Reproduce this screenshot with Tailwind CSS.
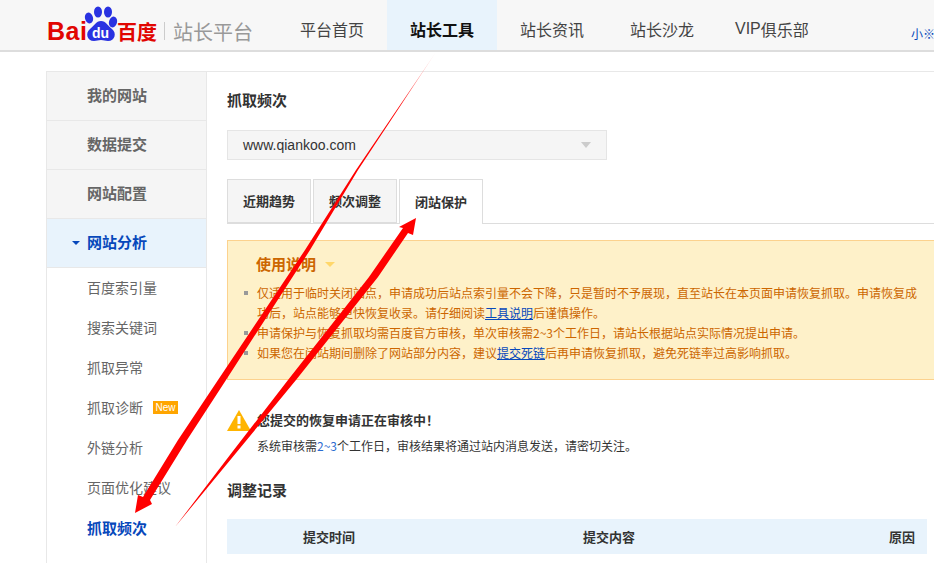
<!DOCTYPE html>
<html lang="zh-CN">
<head>
    <meta charset="UTF-8">
    <title>抓取频次 - 百度站长平台</title>
    <script src="https://cdn.jsdelivr.net/npm/@tailwindcss/browser@4"></script>
</head>
<body class="relative w-[934px] h-[563px] overflow-hidden bg-white text-[#333] font-['Noto_Sans_CJK_SC','Liberation_Sans',sans-serif]">

    <!-- top bar -->
    <header class="h-[52px] bg-[#f7f7f7] border-b-2 border-[#ddd] flex items-end pl-[47px] relative">
        <div class="w-[253px] h-[50px] flex items-start">
            <span class="mt-[17px] w-[37px] text-[25px] leading-[28px] font-bold tracking-[0.5px] text-[#e10601] font-['Liberation_Sans',sans-serif]">Bai</span>
            <div class="relative w-[33px] h-[50px]">
                <svg class="absolute left-0 top-0" width="34" height="44" viewBox="0 0 34 44">
                    <g fill="#2932e1">
                        <ellipse cx="5" cy="18" rx="4" ry="5.5" transform="rotate(-15 5 18)"/>
                        <ellipse cx="14" cy="12" rx="4" ry="5.5"/>
                        <ellipse cx="24" cy="12" rx="4" ry="5.5"/>
                        <ellipse cx="29" cy="22" rx="4" ry="5.5" transform="rotate(15 29 22)"/>
                        <path d="M17 21c5 0 7 5 11 8 5 4 3 12-4 12-3 0-4-1-7-1s-4 1-7 1c-7 0-9-8-4-12 4-3 6-8 11-8z"/>
                    </g>
                </svg>
                <span class="absolute left-[8px] top-[26px] text-[14px] leading-[14px] font-bold text-white font-['Liberation_Sans',sans-serif]">du</span>
            </div>
            <span class="mt-[18px] text-[20px] leading-[28px] font-bold text-[#e10601]">百度</span>
            <span class="mt-[22px] ml-[7px] w-px h-[18px] bg-[#ccc]"></span>
            <span class="mt-[18px] ml-[8px] text-[20px] leading-[28px] text-[#999]">站长平台</span>
        </div>
        <nav class="flex h-[50px] text-[16px] text-[#444]">
            <a class="w-[87px] pt-[8px] flex items-center">平台首页</a>
            <a class="w-[110px] pt-[8px] flex items-center justify-center bg-[#e8f3fc] font-bold text-[#111]">站长工具</a>
            <a class="w-[110px] pt-[8px] flex items-center pl-[23px]">站长资讯</a>
            <a class="w-[105px] pt-[8px] flex items-center pl-[23px]">站长沙龙</a>
            <a class="pt-[8px] flex items-center pl-[23px] whitespace-nowrap"><span class="font-['Liberation_Sans',sans-serif]">VIP</span>俱乐部</a>
        </nav>
        <span class="absolute left-[911px] top-[26px] text-[12px] leading-[16px] text-[#0748bb] whitespace-nowrap">小※</span>
    </header>

    <div class="flex pl-[46px] pt-[19px]">
        <!-- left menu -->
        <aside class="w-[161px] h-[500px] shrink-0 border-x border-t border-[#e8e8e8] text-[#666]">
            <div class="h-[49px] pb-[1px] border-b border-[#e8e8e8] bg-[#f5f5f5] flex items-center pl-[40px] text-[15px] font-bold">我的网站</div>
            <div class="h-[49px] pb-[1px] border-b border-[#e8e8e8] bg-[#f5f5f5] flex items-center pl-[40px] text-[15px] font-bold">数据提交</div>
            <div class="h-[49px] pb-[1px] border-b border-[#e8e8e8] bg-[#f5f5f5] flex items-center pl-[40px] text-[15px] font-bold">网站配置</div>
            <div class="h-[49px] pb-[1px] border-b border-[#e8e8e8] bg-[#e8f3fc] flex items-center pl-[25px] text-[15px] font-bold text-[#0748bb]">
                <span class="w-0 h-0 mr-[7px] border-x-[4px] border-t-[4px] border-x-transparent border-t-[#0748bb]"></span>网站分析
            </div>
            <ul class="text-[14px]">
                <li class="h-[40px] pb-[2px] flex items-center pl-[40px]">百度索引量</li>
                <li class="h-[40px] pb-[2px] flex items-center pl-[40px]">搜索关键词</li>
                <li class="h-[40px] pb-[2px] flex items-center pl-[40px]">抓取异常</li>
                <li class="h-[40px] pb-[2px] flex items-center pl-[40px]">抓取诊断<span class="ml-[10px] w-[25px] h-[13px] bg-[#ffa500] text-white text-[10px] leading-[13px] text-center font-['Liberation_Sans',sans-serif]">New</span></li>
                <li class="h-[40px] pb-[2px] flex items-center pl-[40px]">外链分析</li>
                <li class="h-[40px] pb-[2px] flex items-center pl-[40px]">页面优化建议</li>
                <li class="h-[40px] flex items-center pl-[40px] text-[15px] font-bold text-[#0748bb]">抓取频次</li>
            </ul>
        </aside>

        <!-- main -->
        <main class="w-[727px] shrink-0 border-t border-[#e8e8e8] pl-[20px]">
            <h1 class="mt-[18px] text-[15px] leading-[20px] font-bold">抓取频次</h1>
            <div class="mt-[20px] w-[380px] h-[30px] bg-[#f5f5f5] border border-[#e5e5e5] flex items-center justify-between pl-[15px] pr-[15px] text-[14px] font-['Liberation_Sans',sans-serif]">
                www.qiankoo.com
                <span class="w-0 h-0 border-x-[5px] border-t-[6px] border-x-transparent border-t-[#ccc]"></span>
            </div>

            <div class="mt-[19px] h-[45px] flex border-b border-[#ddd] text-[13px] font-bold">
                <div class="w-[84px] h-[44px] mr-[2px] pb-[1px] bg-[#f5f5f5] border border-[#ddd] flex items-center justify-center">近期趋势</div>
                <div class="w-[84px] h-[44px] mr-[2px] pb-[1px] bg-[#f5f5f5] border border-[#ddd] flex items-center justify-center">频次调整</div>
                <div class="w-[84px] h-[45px] pb-[1px] bg-white border border-b-0 border-[#ddd] flex items-center justify-center">闭站保护</div>
            </div>

            <section class="mt-[16px] w-[720px] h-[140px] bg-[#fef1c9] border-y border-l border-[#fcd28e] text-[#c60]">
                <h2 class="mt-[13px] pl-[28px] flex items-center text-[15px] leading-[20px] font-bold">
                    使用说明<span class="ml-[9px] w-0 h-0 border-x-[5px] border-t-[5px] border-x-transparent border-t-[#ffd76a]"></span>
                </h2>
                <ul class="mt-[9px] text-[12px] leading-[20px] whitespace-nowrap">
                    <li class="flex items-start pl-[16px]"><span class="mt-[8px] mr-[9px] w-[4px] h-[4px] bg-[#999]"></span><span>仅适用于临时关闭站点，申请成功后站点索引量不会下降，只是暂时不予展现，直至站长在本页面申请恢复抓取。申请恢复成<br>功后，站点能够更快恢复收录。请仔细阅读<a class="text-[#0748bb] underline">工具说明</a>后谨慎操作。</span></li>
                    <li class="flex items-start pl-[16px]"><span class="mt-[8px] mr-[9px] w-[4px] h-[4px] bg-[#999]"></span><span>申请保护与恢复抓取均需百度官方审核，单次审核需2~3个工作日，请站长根据站点实际情况提出申请。</span></li>
                    <li class="flex items-start pl-[16px]"><span class="mt-[8px] mr-[9px] w-[4px] h-[4px] bg-[#999]"></span><span>如果您在闭站期间删除了网站部分内容，建议<a class="text-[#0748bb] underline">提交死链</a>后再申请恢复抓取，避免死链率过高影响抓取。</span></li>
                </ul>
            </section>

            <div class="mt-[30px] flex">
                <svg class="shrink-0" width="24" height="21" viewBox="0 0 24 21">
                    <path d="M12 0L24 21H0z" fill="#ffb400"/>
                    <rect x="10.500" y="6" width="3" height="8" fill="#fff"/>
                    <rect x="10.500" y="15.500" width="3" height="3" fill="#fff"/>
                </svg>
                <div class="ml-[6px]">
                    <p class="text-[13px] leading-[20px] font-bold">您提交的恢复申请正在审核中！</p>
                    <p class="mt-[6px] text-[12px] leading-[20px]">系统审核需<span class="text-[#2b6bd0]">2~3</span>个工作日，审核结果将通过站内消息发送，请密切关注。</p>
                </div>
            </div>

            <h2 class="mt-[24px] text-[15px] leading-[20px] font-bold">调整记录</h2>
            <div class="mt-[19px] w-[700px] h-[35px] bg-[#e8f3fc] flex items-center text-[13px] font-bold">
                <span class="ml-[76px] w-[280px]">提交时间</span>
                <span class="w-[306px]">提交内容</span>
                <span>原因</span>
            </div>
        </main>
    </div>

    <!-- red annotation arrows drawn over the page -->
    <svg class="absolute left-0 top-0 pointer-events-none" width="934" height="563" viewBox="0 0 934 563">
        <defs>
            <linearGradient id="fade" gradientUnits="userSpaceOnUse" x1="436" y1="52" x2="400" y2="107">
                <stop offset="0" stop-color="#ff0000" stop-opacity="0.1"/>
                <stop offset="1" stop-color="#ff0000"/>
            </linearGradient>
        </defs>
        <polygon fill="url(#fade)" points="436,52 358,170 310,250 226,380 187,440 150,500 152,504 135,513 138,495 143,497 178,440 218,380 305,250 356,170"/>
        <polygon fill="#ff0000" points="175,527 233,451 288,380 369,277 403,228 399,227 416,218 413,235 408,233 378,277 296,380 236,453"/>
    </svg>
</body>
</html>
